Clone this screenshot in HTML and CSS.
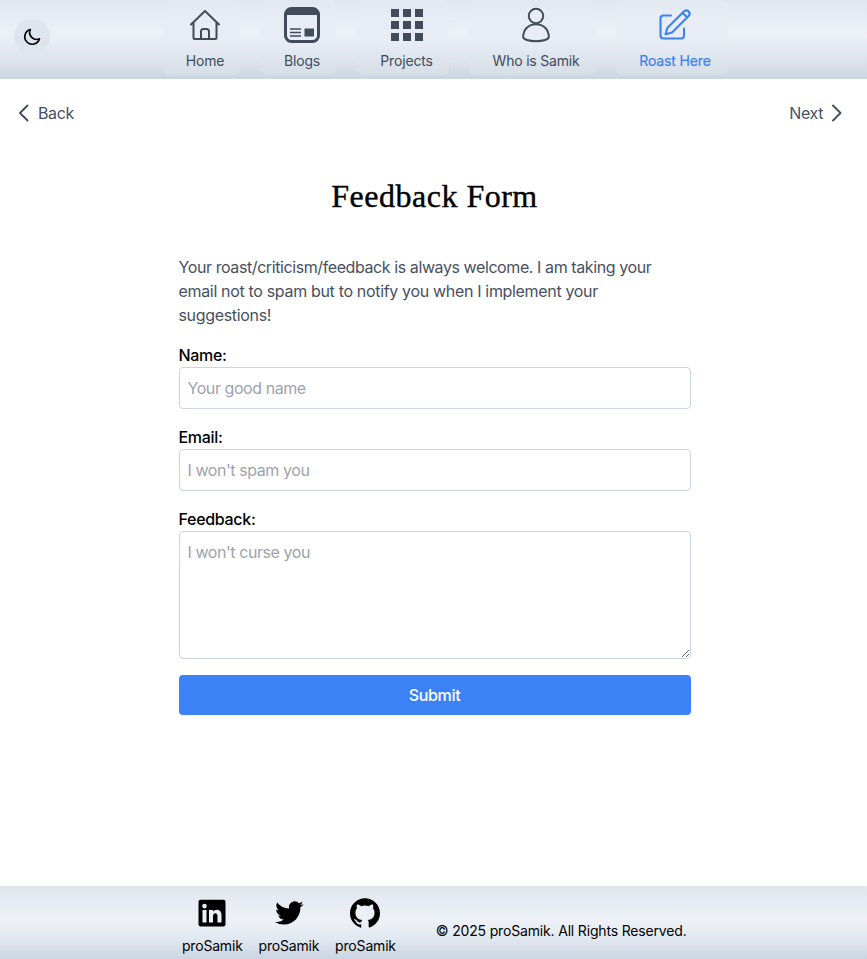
FILE: index.html
```html
<!DOCTYPE html>
<html lang="en">
<head>
<meta charset="utf-8">
<title>Feedback Form</title>
<link rel="stylesheet" href="styles.css">
</head>
<body>
<header class="topbar">
  <button class="theme" aria-label="Theme"><svg width="20" height="20" viewBox="0 0 24 24" fill="none" stroke="currentColor" stroke-width="2" stroke-linejoin="round"><path d="M10 3A9 9 0 1 0 21 14.2A8.4 8.4 0 0 1 10 3Z"/></svg></button>
  <nav class="nav">
    <a class="item home"><svg width="36" height="36" viewBox="0 0 36 36" fill="none" stroke="currentColor" stroke-width="2" stroke-linecap="round" stroke-linejoin="round"><path d="M4 17.5 18 4l14 13.5M6.5 15.5V31q0 1 1 1h21q1 0 1-1V15.5M14 32v-7.500q0-2.500 2.500-2.500h3q2.500 0 2.500 2.500V32"/></svg><span>Home</span></a>
    <a class="item blogs"><svg width="36" height="36" viewBox="0 0 36 36" fill="none" stroke="currentColor"><rect x="1.500" y="1.500" width="33" height="33" rx="6" stroke-width="3"/><path fill="currentColor" stroke="none" d="M1 8V6q1-5 6-5h22q5 0 6 5v2ZM20.500 21.500h9.500v8h-9.500Z"/><path stroke-width="1.300" d="M6 22h11M6 25.500h11M6 29h11"/></svg><span>Blogs</span></a>
    <a class="item projects"><svg width="36" height="36" viewBox="0 0 36 36" fill="currentColor"><path d="M2 2h8v8H2zM14 2h8v8h-8zM26 2h8v8h-8zM2 14h8v8H2zM14 14h8v8h-8zM26 14h8v8h-8zM2 26h8v8H2zM14 26h8v8h-8zM26 26h8v8h-8z"/></svg><span>Projects</span></a>
    <a class="item who"><svg width="36" height="36" viewBox="0 0 36 36" fill="none" stroke="currentColor" stroke-width="2"><circle cx="18" cy="9" r="7.200"/><path d="M5.200 30C5.200 22.500 10.500 17.200 18 17.200S30.800 22.500 30.800 30C30.800 32.500 25 34.200 18 34.200S5.200 32.500 5.200 30Z"/></svg><span>Who is Samik</span></a>
    <a class="item roast"><svg width="36" height="36" viewBox="0 0 36 36" fill="none" stroke="currentColor" stroke-width="2.100" stroke-linejoin="round" stroke-linecap="round"><path d="M14 8.500H6.500Q3.500 8.500 3.500 11.500V28.500Q3.500 31.500 6.500 31.500H24Q27 31.500 27 28.500V21.500M8.500 27.200l1.800-6.200L26.800 4.500Q29 2.300 31.500 4.300Q33.800 6.800 31.600 9.100L15 25.500L8.500 27.200M25.500 5.800l4.800 4.800"/></svg><span>Roast Here</span></a>
  </nav>
</header>
<main>
  <div class="pager">
    <a><svg width="12" height="18" viewBox="0 0 12 18"><path d="M9.500 1.500 2 9l7.500 7.500"/></svg><span>Back</span></a>
    <a><span>Next</span><svg width="12" height="18" viewBox="0 0 12 18"><path d="M2 1.500 9.500 9l-7.500 7.500"/></svg></a>
  </div>
  <h1>Feedback Form</h1>
  <form class="form">
    <p class="intro">Your roast/criticism/feedback is always welcome. I am taking your<br><span class="loose">email not to spam but to notify you when I implement your<br>suggestions!</span></p>
    <label for="name">Name:</label>
    <input id="name" type="text" placeholder="Your good name">
    <label for="email">Email:</label>
    <input id="email" type="email" placeholder="I won't spam you">
    <label for="feedback">Feedback:</label>
    <textarea id="feedback" placeholder="I won't curse you"></textarea>
    <button class="submit" type="button">Submit</button>
  </form>
</main>
<footer class="footer">
  <div class="socials">
    <a><svg width="30" height="30" viewBox="0 0 30 30"><path fill="currentColor" fill-rule="evenodd" d="M3.500 1.700h23q2 0 2 2v22.800q0 2-2 2h-23q-2 0-2-2V3.700q0-2 2-2ZM5.500 12v12.500h4V12ZM7.500 5.800a2.300 2.300 0 1 0 0 4.600 2.300 2.300 0 0 0 0-4.600ZM12 12v12.500h4v-6.200c0-4 4.500-4 4.500-.2v6.400h4v-7.500c0-6-6.300-6.500-8.500-3.300V12Z"/></svg><span>proSamik</span></a>
    <a><svg width="30" height="30" viewBox="0 0 24 24"><path fill="currentColor" d="M23.643 4.937c-.835.37-1.732.62-2.675.733a4.670 4.670 0 0 0 2.048-2.578 9.300 9.300 0 0 1-2.958 1.130 4.660 4.660 0 0 0-7.938 4.250 13.229 13.229 0 0 1-9.602-4.868 4.660 4.660 0 0 0 1.442 6.220 4.647 4.647 0 0 1-2.110-.583v.060a4.660 4.660 0 0 0 3.737 4.568 4.692 4.692 0 0 1-2.104.080 4.661 4.661 0 0 0 4.352 3.234A9.348 9.348 0 0 1 .714 19.114a13.200 13.200 0 0 0 7.140 2.093c8.570 0 13.255-7.098 13.255-13.254 0-.200-.005-.402-.014-.602a9.470 9.470 0 0 0 2.548-2.414Z"/></svg><span>proSamik</span></a>
    <a><svg width="30" height="30" viewBox="0 0 24 24"><path fill="currentColor" d="M12 .297c-6.630 0-12 5.373-12 12 0 5.303 3.438 9.800 8.205 11.385.600.113.820-.258.820-.577 0-.285-.010-1.040-.015-2.040-3.338.724-4.042-1.610-4.042-1.610C4.422 18.070 3.633 17.700 3.633 17.700c-1.087-.744.084-.729.084-.729 1.205.084 1.838 1.236 1.838 1.236 1.070 1.835 2.809 1.305 3.495.998.108-.776.417-1.305.760-1.605-2.665-.300-5.466-1.332-5.466-5.930 0-1.310.465-2.380 1.235-3.220-.135-.303-.540-1.523.105-3.176 0 0 1.005-.322 3.300 1.230.960-.267 1.980-.399 3-.405 1.020.006 2.040.138 3 .405 2.280-1.552 3.285-1.230 3.285-1.230.645 1.653.240 2.873.120 3.176.765.840 1.230 1.910 1.230 3.220 0 4.610-2.805 5.625-5.475 5.920.420.360.810 1.096.810 2.220 0 1.606-.015 2.896-.015 3.286 0 .315.210.690.825.570C20.565 22.092 24 17.592 24 12.297c0-6.627-5.373-12-12-12"/></svg><span>proSamik</span></a>
  </div>
  <p class="copyright">© 2025 proSamik. All Rights Reserved.</p>
</footer>
</body>
</html>
```

FILE: styles.css
```css
* { box-sizing: border-box; }
body { margin: 0; height: 959px; display: flex; flex-direction: column; background: #fff; color: #000; font: 16px/24px Inter, "Liberation Sans", sans-serif; }
svg { display: block; flex: none; }
p, h1 { margin: 0; }
.topbar { height: 79px; flex: none; display: flex; padding-left: 14px; background: linear-gradient(#e0e6ef, #e8edf5 22%, #edf1f7 43%, #e6ebf3 58%, #dce3eb 78%, #cbd5e1); }
.theme { width: 36px; height: 36px; margin: 19px 113px 0 0; padding: 0; border: 0; border-radius: 50%; background: #dfe5ee; color: #000; display: grid; place-items: center; }
.nav { display: flex; gap: 20px; }
.item { height: 75px; padding: 7px 0 0 8px; border-radius: 6px; background: linear-gradient(#e2e8f0, #e8edf5 22%, #e8edf5 56%, #dfe5ed 78%, #d6dee7); color: #414b5a; display: flex; flex-direction: column; align-items: center; gap: 8px; font-size: 14px; line-height: 20px; white-space: nowrap; letter-spacing: -.15px; }
.home { width: 77px; padding-left: 7px; }
.blogs { width: 76px; }
.projects { width: 93px; padding-left: 9px; }
.projects span { margin-left: -1px; }
.who { width: 127px; padding-left: 7px; letter-spacing: -.2px; }
.roast { width: 111px; padding-left: 7px; color: #3b82f6; }
.roast span { -webkit-text-stroke: .2px #3b82f6; }
main { flex: 1; }
.pager { display: flex; justify-content: space-between; padding: 22px 24px 0 18px; color: #475061; }
.pager a { display: flex; align-items: center; gap: 8px; letter-spacing: -.4px; }
.pager path { fill: none; stroke: currentColor; stroke-width: 2; stroke-linecap: round; stroke-linejoin: round; }
h1 { margin-top: 53px; padding-left: 2px; text-align: center; font: 400 32px/36px "Liberation Serif", serif; letter-spacing: .5px; -webkit-text-stroke: .4px #000; }
.form { width: 512px; margin: 41px 0 0 179px; display: flex; flex-direction: column; }
.intro { color: #475061; margin: 0 0 16px -.5px; letter-spacing: -.41px; white-space: nowrap; }
.loose { letter-spacing: -.33px; }
label { margin-left: -.5px; font-weight: 500; letter-spacing: -.3px; }
input, textarea { width: 100%; height: 42px; margin: 0 0 16px; padding: 8px 7.500px; border: 1px solid #cbd5e1; border-radius: 4px; background: #fff; font: inherit; letter-spacing: -.43px; }
textarea { height: 128px; resize: vertical; }
::placeholder { color: #9ca3af; opacity: 1; }
.submit { height: 40px; padding: 0 1px 0 0; border: 0; border-radius: 4px; background: #3b82f6; color: #fff; font: 500 16px/24px Inter, sans-serif; letter-spacing: -.3px; }
.footer { height: 73px; flex: none; display: flex; padding-left: 182px; background: linear-gradient(#dfe6ee, #e8edf5 25%, #edf1f7 48%, #e2e8f0 72%, #cbd5e1); font-size: 14px; line-height: 20px; }
.socials { display: flex; gap: 16px; padding-top: 12px; letter-spacing: -.18px; }
.socials a { width: 60.600px; display: flex; flex-direction: column; align-items: center; gap: 8px; white-space: nowrap; }
.copyright { margin: 35px 0 0 40px; white-space: nowrap; letter-spacing: -.17px; }
```
